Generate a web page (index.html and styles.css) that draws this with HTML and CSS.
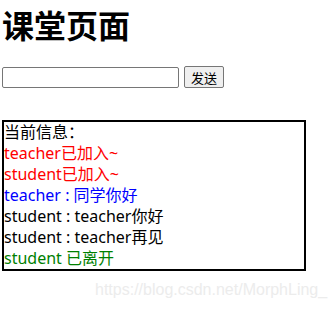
FILE: index.html
```html
<!DOCTYPE html>
<html lang="zh">
  <head>
    <meta charset="UTF-8" />
    <title>课堂页面</title>
    <link rel="stylesheet" href="styles.css">
  </head>
  <body>
    <h1 class="title">课堂页面</h1>

    <form class="send-form">
      <input type="text" class="send-input" />
      <button type="button" class="send-button">发送</button>
    </form>

    <div class="messages">
      <div>当前信息：</div>
      <div class="msg-join">teacher已加入~</div>
      <div class="msg-join">student已加入~</div>
      <div class="msg-self">teacher : 同学你好</div>
      <div>student : teacher你好</div>
      <div>student : teacher再见</div>
      <div class="msg-leave">student 已离开</div>
    </div>

    <div class="watermark">https://blog.csdn.net/MorphLing_</div>
  </body>
</html>
```

FILE: styles.css
```css
* {
  box-sizing: border-box;
}

body {
  margin: 0 2px;
  font-family: "Noto Sans", "Noto Sans CJK SC", sans-serif;
  font-size: 16px;
  color: #000;
  background: #fff;
}

.title {
  font-family: "Noto Sans CJK SC", sans-serif;
  font-size: 32px;
  font-weight: 700;
  line-height: 40px;
  margin: 4px 0 22px;
}

.send-form {
  display: flex;
  align-items: center;
  gap: 5px;
}

.send-input {
  width: 177px;
  height: 21px;
  border: 1px solid #767676;
  border-radius: 2px;
  padding: 1px 2px;
  font-size: 13px;
}

.send-button {
  height: 22px;
  padding: 0 6px;
  border: 1px solid #767676;
  border-radius: 2px;
  background: #efefef;
  font-family: "Noto Sans CJK SC", sans-serif;
  font-size: 13px;
  line-height: 1;
}

.messages {
  width: 304px;
  margin-top: 32px;
  border: 2px solid #000;
  line-height: 21px;
  padding: 0;
}

.msg-join {
  color: red;
}

.msg-self {
  color: blue;
}

.msg-leave {
  color: green;
}

.watermark {
  position: absolute;
  left: 95px;
  top: 281px;
  font-family: "Liberation Sans", Arial, sans-serif;
  font-size: 16px;
  color: #ececec;
}
```
